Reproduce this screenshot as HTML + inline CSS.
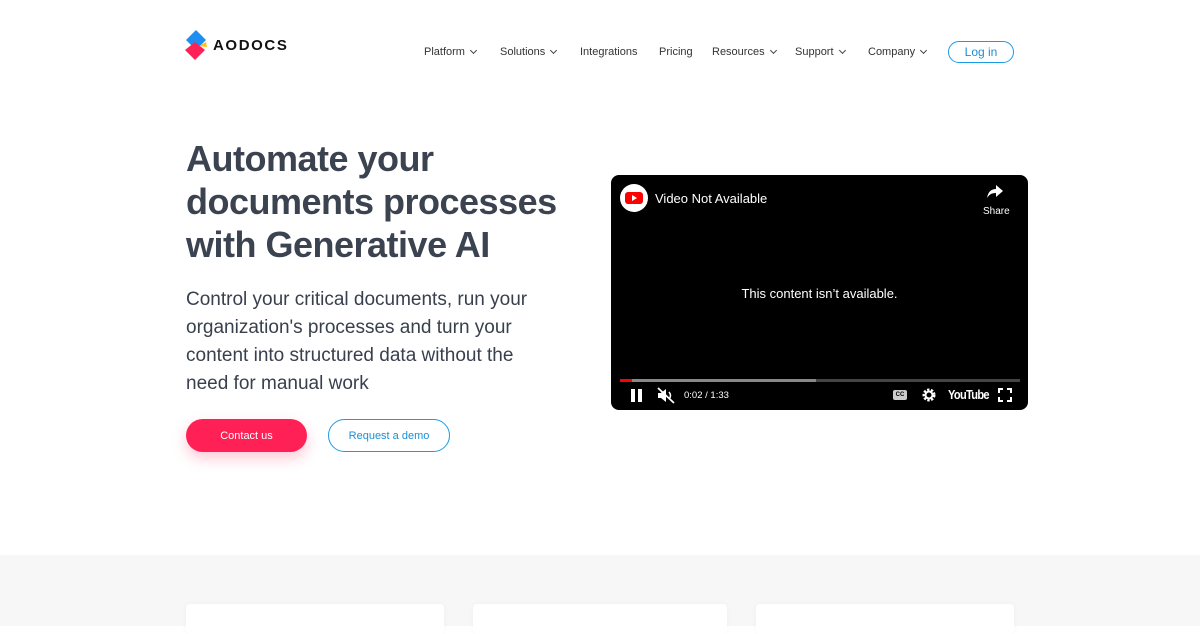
<!DOCTYPE html>
<html><head><meta charset="utf-8"><style>
*{margin:0;padding:0;box-sizing:border-box}
body{width:1200px;height:626px;overflow:hidden;background:#fff;font-family:"Liberation Sans",sans-serif;color:#39404d;position:relative}
.abs{position:absolute}
.nav{top:46px;font-size:11px;color:#333;display:flex;gap:0}
.nav span{position:absolute;white-space:nowrap}
.chev{display:inline-block;width:5px;height:5px;border-right:1.3px solid #444;border-bottom:1.3px solid #444;transform:rotate(45deg);margin-left:6px;position:relative;top:-2px}
h1{position:absolute;left:186px;top:137px;font-size:36px;line-height:43px;font-weight:bold;color:#3b4250;letter-spacing:-0.5px;width:420px}
p.lead{position:absolute;left:186px;top:286px;font-size:19px;line-height:28px;color:#39404d;width:356px}
.btn{position:absolute;top:419px;height:33px;border-radius:17px;font-size:11px;display:flex;align-items:center;justify-content:center}
.video{left:611px;top:175px;width:417px;height:235px;background:#000;border-radius:8px;color:#fff;overflow:hidden}
</style></head><body>
<svg class="abs" style="left:185px;top:29px" width="24" height="32" viewBox="0 0 24 32">
<polygon points="11,1 21,11 11,21 1,11" fill="#1e8ff0"/>
<polygon points="0,21 10,13 20,21 10,31" fill="#ff2056"/>
<polygon points="14,17 21,13 22,18" fill="#ffc20e"/>
</svg>
<div class="abs" style="left:213px;top:37px;font-size:15px;font-weight:bold;letter-spacing:1.6px;color:#111">AODOCS</div>
<div class="abs nav" style="left:0;width:1200px">
<span style="left:424px">Platform<i class="chev"></i></span>
<span style="left:500px">Solutions<i class="chev"></i></span>
<span style="left:580px">Integrations</span>
<span style="left:659px">Pricing</span>
<span style="left:712px">Resources<i class="chev"></i></span>
<span style="left:795px">Support<i class="chev"></i></span>
<span style="left:868px">Company<i class="chev"></i></span>
</div>
<div class="abs" style="left:948px;top:41px;width:66px;height:22px;border:1px solid #1a9be6;border-radius:11px;color:#1a8fd8;font-size:12px;text-align:center;line-height:20px">Log in</div>
<h1>Automate your documents processes with Generative AI</h1>
<p class="lead">Control your critical documents, run your organization's processes and turn your content into structured data without the need for manual work</p>
<div class="btn" style="left:186px;width:121px;background:#ff2056;color:#fff;box-shadow:0 6px 14px rgba(255,32,86,0.25)">Contact us</div>
<div class="btn" style="left:328px;width:122px;border:1px solid #1a9be6;color:#1a8fd8">Request a demo</div>
<div class="abs video">
<div class="abs" style="left:9px;top:9px;width:28px;height:28px;border-radius:50%;background:#fff"></div>
<div class="abs" style="left:14px;top:17px;width:18px;height:12px;border-radius:3px;background:#f00"></div>
<div class="abs" style="left:21px;top:20px;width:0;height:0;border-left:5px solid #fff;border-top:3px solid transparent;border-bottom:3px solid transparent"></div>
<div class="abs" style="left:44px;top:16px;font-size:13px">Video Not Available</div>
<svg class="abs" style="left:376px;top:10px" width="16" height="14" viewBox="0 0 16 14"><path d="M9 0 L16 6 L9 12 L9 8 C4 8 2 10 0 13 C1 7 4 4 9 4 Z" fill="#fff"/></svg>
<div class="abs" style="left:372px;top:31px;font-size:10px">Share</div>
<div class="abs" style="left:0;width:417px;top:111px;text-align:center;font-size:13px">This content isn’t available.</div>
<div class="abs" style="left:9px;top:204px;width:400px;height:3px;background:#444"></div>
<div class="abs" style="left:9px;top:204px;width:196px;height:3px;background:#888"></div>
<div class="abs" style="left:9px;top:204px;width:12px;height:3px;background:#f00"></div>
<div class="abs" style="left:20px;top:214px;width:4px;height:13px;background:#fff"></div>
<div class="abs" style="left:27px;top:214px;width:4px;height:13px;background:#fff"></div>
<svg class="abs" style="left:46px;top:212px" width="18" height="17" viewBox="0 0 18 17"><path d="M1 6 H4 L9 2 V15 L4 11 H1 Z" fill="#fff"/><path d="M1 1 L17 16" stroke="#fff" stroke-width="1.8"/><path d="M12 5 Q15 8.5 12 12" stroke="#fff" fill="none" stroke-width="1.5"/></svg>
<div class="abs" style="left:73px;top:215px;font-size:9.5px">0:02 / 1:33</div>
<div class="abs" style="left:282px;top:215px;width:14px;height:10px;background:#ccc;border-radius:2px;font-size:6px;color:#000;text-align:center;line-height:10px;font-weight:bold">CC</div>
<svg class="abs" style="left:311px;top:213px" width="14" height="14" viewBox="0 0 14 14"><circle cx="7" cy="7" r="5" fill="none" stroke="#fff" stroke-width="3" stroke-dasharray="2.2 1.4"/><circle cx="7" cy="7" r="3.5" fill="none" stroke="#fff" stroke-width="2"/></svg>
<div class="abs" style="left:337px;top:212px;font-size:13px;font-weight:bold;letter-spacing:-0.8px;transform:scaleX(0.85);transform-origin:left">YouTube</div>
<svg class="abs" style="left:387px;top:213px" width="14" height="14" viewBox="0 0 14 14" fill="none" stroke="#fff" stroke-width="2"><path d="M1 5V1H5M9 1H13V5M13 9V13H9M5 13H1V9"/></svg>
</div>
<div class="abs" style="left:0;top:555px;width:1200px;height:71px;background:#f7f7f8"></div>
<div class="abs" style="left:186px;top:604px;width:258px;height:30px;background:#fff;border-radius:4px;box-shadow:0 0 6px rgba(0,0,0,0.04)"></div>
<div class="abs" style="left:473px;top:604px;width:254px;height:30px;background:#fff;border-radius:4px;box-shadow:0 0 6px rgba(0,0,0,0.04)"></div>
<div class="abs" style="left:756px;top:604px;width:258px;height:30px;background:#fff;border-radius:4px;box-shadow:0 0 6px rgba(0,0,0,0.04)"></div>
</body></html>
